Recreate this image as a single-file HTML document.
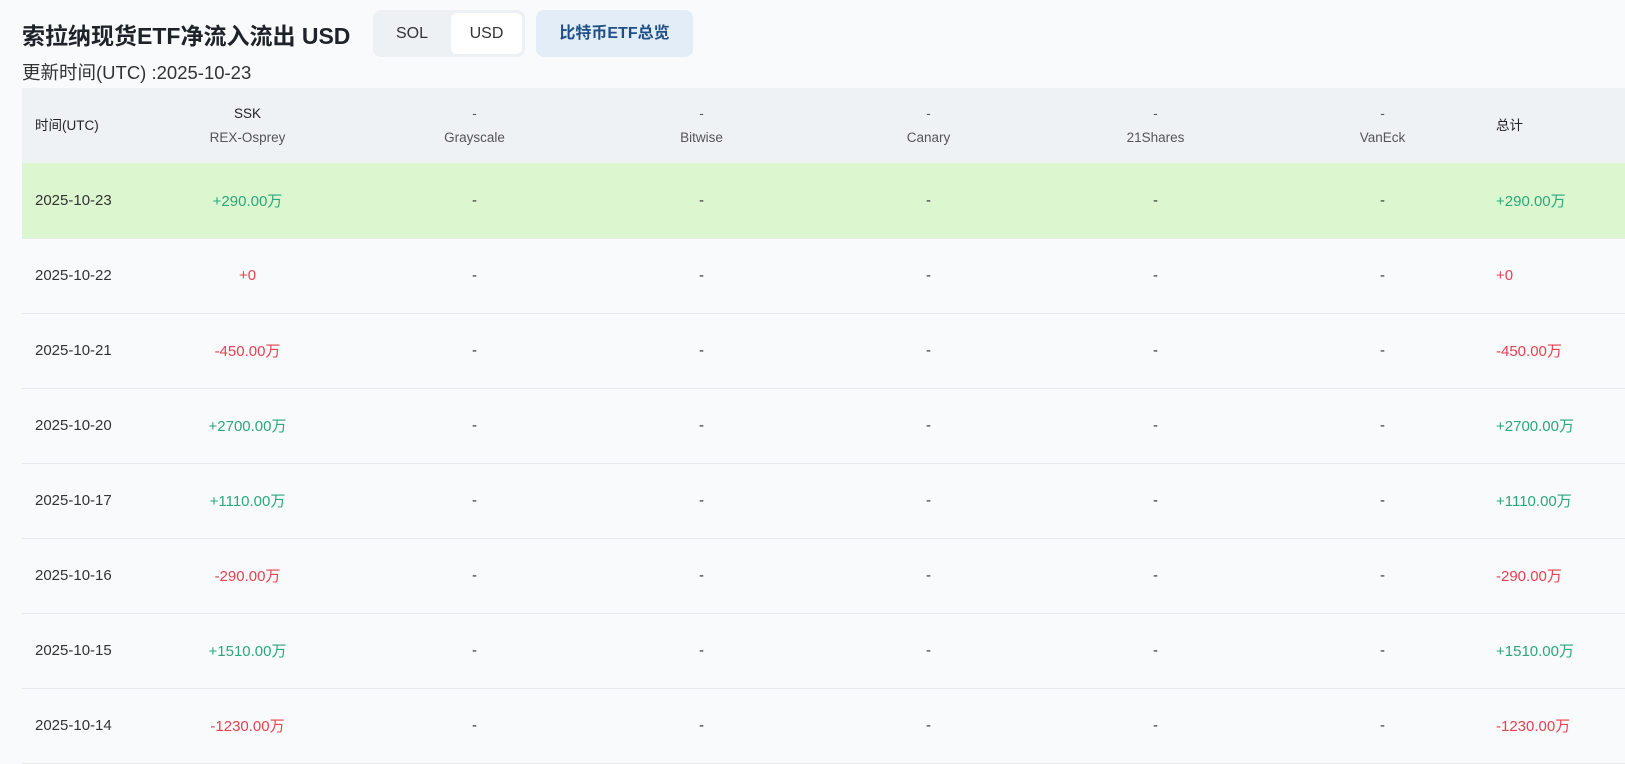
<!DOCTYPE html>
<html><head><meta charset="utf-8"><style>
*{margin:0;padding:0;box-sizing:border-box}
body{width:1625px;height:745px;overflow:hidden;background:#f9fafb;font-family:"Liberation Sans","Noto Sans CJK SC",sans-serif;color:#1e2329;position:relative}
.title{position:absolute;left:22px;top:20px;font-size:23px;font-weight:bold;line-height:32px}
.toggle{position:absolute;left:373px;top:10px;width:152px;height:47px;background:#eef1f4;border-radius:8px}
.toggle span{position:absolute;top:3px;height:41px;line-height:41px;font-size:16px;text-align:center;color:#333}
.btc{position:absolute;left:536px;top:10px;width:157px;height:47px;background:#e3edf8;border-radius:8px;line-height:47px;text-align:center;font-size:16px;font-weight:bold;color:#1e4f86}
.sub{position:absolute;left:22px;top:60px;font-size:18.5px;color:#333;line-height:26px}
table{position:absolute;left:22px;top:88px;width:1603px;border-collapse:collapse;font-size:15px}
th{background:#eef2f5;height:75px;font-weight:normal;font-size:13.5px;color:#555;line-height:24px}
th b{font-weight:normal;color:#222}
td{height:75px;border-bottom:1px solid #e8ebee;text-align:center;color:#333}
td:first-child,th:first-child{text-align:left;padding-left:13px}
td:last-child,th:last-child{text-align:left;padding-left:0}
tr.hl td{background:#dcf7d0}
.g{color:#2aa77c}.r{color:#e5414f}
</style></head><body>
<div class="title">索拉纳现货ETF净流入流出 USD</div>
<div class="toggle"><span style="left:3px;width:72px">SOL</span><span style="left:78px;width:71px;background:#fff;border-radius:6px">USD</span></div>
<div class="btc">比特币ETF总览</div>
<div class="sub">更新时间(UTC) :2025-10-23</div>
<table>
<colgroup><col style="width:112px"><col style="width:227px"><col style="width:227px"><col style="width:227px"><col style="width:227px"><col style="width:227px"><col style="width:227px"><col></colgroup>
<tr><th><b>时间(UTC)</b></th><th><b>SSK</b><br>REX-Osprey</th><th>-<br>Grayscale</th><th>-<br>Bitwise</th><th>-<br>Canary</th><th>-<br>21Shares</th><th>-<br>VanEck</th><th><b>总计</b></th></tr>
<tr class="hl"><td>2025-10-23</td><td class="g">+290.00万</td><td>-</td><td>-</td><td>-</td><td>-</td><td>-</td><td class="g">+290.00万</td></tr>
<tr><td>2025-10-22</td><td class="r">+0</td><td>-</td><td>-</td><td>-</td><td>-</td><td>-</td><td class="r">+0</td></tr>
<tr><td>2025-10-21</td><td class="r">-450.00万</td><td>-</td><td>-</td><td>-</td><td>-</td><td>-</td><td class="r">-450.00万</td></tr>
<tr><td>2025-10-20</td><td class="g">+2700.00万</td><td>-</td><td>-</td><td>-</td><td>-</td><td>-</td><td class="g">+2700.00万</td></tr>
<tr><td>2025-10-17</td><td class="g">+1110.00万</td><td>-</td><td>-</td><td>-</td><td>-</td><td>-</td><td class="g">+1110.00万</td></tr>
<tr><td>2025-10-16</td><td class="r">-290.00万</td><td>-</td><td>-</td><td>-</td><td>-</td><td>-</td><td class="r">-290.00万</td></tr>
<tr><td>2025-10-15</td><td class="g">+1510.00万</td><td>-</td><td>-</td><td>-</td><td>-</td><td>-</td><td class="g">+1510.00万</td></tr>
<tr><td>2025-10-14</td><td class="r">-1230.00万</td><td>-</td><td>-</td><td>-</td><td>-</td><td>-</td><td class="r">-1230.00万</td></tr>
</table>
</body></html>
